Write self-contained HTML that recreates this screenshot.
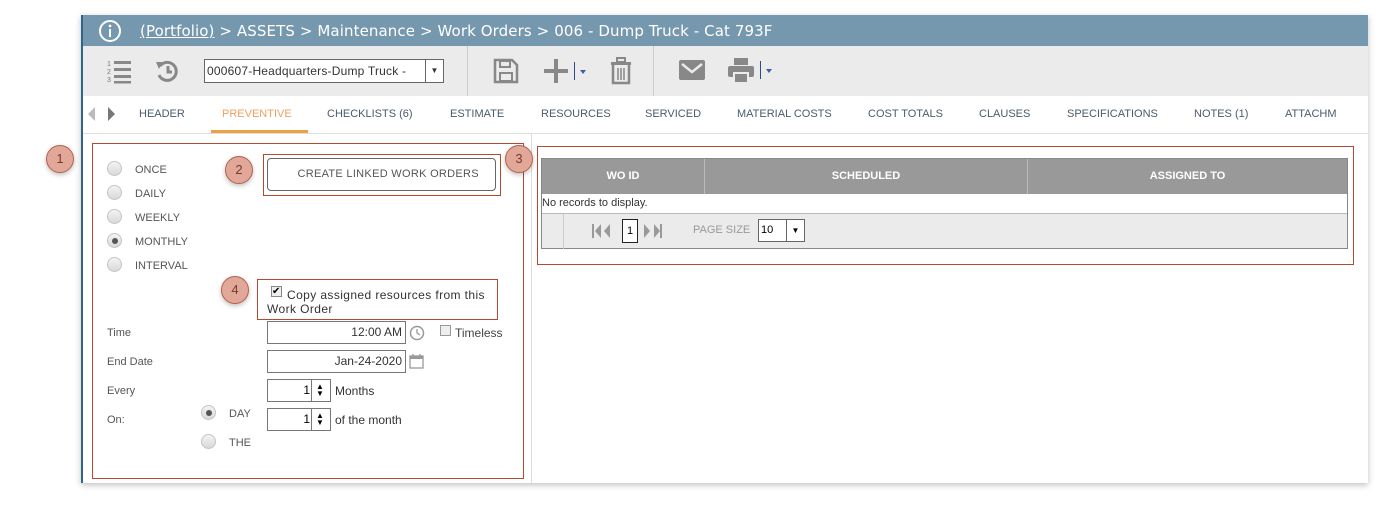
<!DOCTYPE html>
<html><head><style>
body{margin:0;width:1387px;height:506px;background:#fff;font-family:"Liberation Sans",sans-serif;position:relative;overflow:hidden}
.a{position:absolute}
.main{left:81px;top:15px;width:1287px;height:468px;background:#fff;box-shadow:0 2px 6px rgba(0,0,0,.25);border-left:2px solid #2e6589;box-sizing:border-box}
.hdr{left:0;top:0;width:100%;height:31px;background:#7598ae;color:#fff;font-size:15px}
.tb{left:0;top:31px;width:100%;height:50px;background:#ebebeb}
.tab{top:93px;font-size:11px;color:#4a5b6b}
.lbl{font-size:11px;color:#555}
.rad{width:15px;height:15px;border-radius:50%;background:linear-gradient(#f4f4f4,#d8d8d8);border:1px solid #c4c4c4;box-sizing:border-box}
.badge{width:28px;height:28px;border-radius:50%;background:#e1a899;border:1.5px solid #b5604a;box-sizing:border-box;color:#7a3a2a;font-size:13px;text-align:center;line-height:25px;box-shadow:0 2px 5px rgba(0,0,0,.25)}
.red{border:1px solid #b24a30;box-sizing:border-box}
.inp{border:1px solid #777;box-sizing:border-box;height:23px;background:#fff;font-size:12px;color:#333;text-align:right;line-height:21px;padding-right:3px}
.sp{border:1px solid #777;box-sizing:border-box;height:23px;background:#fff}
</style></head><body>
<div class="a main">
 <div class="a hdr">
  <svg class="a" style="left:15px;top:4px" width="24" height="24"><circle cx="12" cy="12" r="10" fill="none" stroke="#fff" stroke-width="2"/><rect x="11" y="10" width="2" height="8" fill="#fff"/><circle cx="12" cy="7" r="1.4" fill="#fff"/></svg>
  <div class="a" style="left:57px;top:7px;font-family:'DejaVu Sans',sans-serif;font-size:15px;letter-spacing:.1px"><u>(Portfolio)</u> &gt; ASSETS &gt; Maintenance &gt; Work Orders &gt; 006 - Dump Truck - Cat 793F</div>
 </div>
 <div class="a tb">
  <svg class="a" style="left:24px;top:12px" width="26" height="26"><text x="0" y="8" font-size="7" fill="#777">1</text><text x="0" y="16" font-size="7" fill="#777">2</text><text x="0" y="24" font-size="7" fill="#777">3</text><rect x="7" y="3" width="17" height="3" fill="#888"/><rect x="7" y="10" width="17" height="3" fill="#888"/><rect x="7" y="17" width="17" height="3" fill="#888"/><rect x="7" y="23" width="17" height="2.5" fill="#888"/></svg>
  <svg class="a" style="left:71px;top:12px" width="28" height="26"><path d="M6 8 A9 9 0 1 1 5 17" fill="none" stroke="#888" stroke-width="3"/><path d="M2 4 L9 4 L5 11Z" fill="#888"/><path d="M14 8 V14 H18" fill="none" stroke="#888" stroke-width="3"/></svg>
  <div class="a" style="left:121px;top:13px;width:240px;height:24px;border:1px solid #666;background:#fff;box-sizing:border-box;font-size:12px;line-height:22px;color:#333;padding-left:2px;letter-spacing:.2px">000607-Headquarters-Dump Truck -<div class="a" style="right:0;top:0;width:17px;height:22px;border-left:1px solid #666;font-size:8px;text-align:center">▼</div></div>
  <div class="a" style="left:384px;top:0;width:1px;height:50px;background:#ccc"></div>
  <svg class="a" style="left:409px;top:12px" width="28" height="26"><path d="M3 2 H20 L25 7 V24 H3Z" fill="none" stroke="#888" stroke-width="2.5"/><rect x="8" y="3" width="10" height="6" fill="none" stroke="#888" stroke-width="2"/><rect x="8" y="15" width="12" height="8" fill="none" stroke="#888" stroke-width="2"/></svg>
  <svg class="a" style="left:461px;top:12px" width="45" height="26"><rect x="0" y="11" width="24" height="4" fill="#888"/><rect x="10" y="1" width="4" height="24" fill="#888"/><rect x="30" y="4" width="1" height="18" fill="#2e4a8a"/><path d="M36 12 L42 12 L39 16Z" fill="#3b5fa8"/></svg>
  <svg class="a" style="left:527px;top:11px" width="22" height="28"><rect x="1" y="5" width="20" height="3" fill="#888"/><rect x="7" y="1" width="8" height="4" fill="none" stroke="#888" stroke-width="2"/><path d="M3 8 V26 H19 V8" fill="none" stroke="#888" stroke-width="2.5"/><path d="M8 11V23M11 11V23M14 11V23" stroke="#888" stroke-width="1.5"/></svg>
  <div class="a" style="left:570px;top:0;width:1px;height:50px;background:#ccc"></div>
  <svg class="a" style="left:596px;top:14px" width="26" height="20"><rect x="0" y="0" width="26" height="20" rx="2" fill="#888"/><path d="M3 4 L13 12 L23 4" fill="none" stroke="#ebebeb" stroke-width="2.5"/></svg>
  <svg class="a" style="left:645px;top:11px" width="50" height="28"><rect x="6" y="1" width="14" height="7" fill="#888"/><rect x="0" y="9" width="26" height="11" rx="2" fill="#888"/><rect x="6" y="16" width="14" height="10" fill="#888" stroke="#ebebeb" stroke-width="2"/><rect x="32" y="4" width="1" height="18" fill="#2e4a8a"/><path d="M38 12 L44 12 L41 16Z" fill="#3b5fa8"/></svg>
 </div>
 <svg class="a" style="left:4px;top:91px" width="30" height="16"><path d="M8 1 L1 8 L8 15Z" fill="#bbb"/><path d="M21 1 L28 8 L21 15Z" fill="#777"/></svg>
 <div class="a tab" style="left:56px">HEADER</div>
 <div class="a tab" style="left:139px;color:#f0a060">PREVENTIVE</div>
 <div class="a" style="left:128px;top:115px;width:97px;height:3px;background:#f0a040"></div>
 <div class="a tab" style="left:244px">CHECKLISTS (6)</div>
 <div class="a tab" style="left:367px">ESTIMATE</div>
 <div class="a tab" style="left:458px">RESOURCES</div>
 <div class="a tab" style="left:562px">SERVICED</div>
 <div class="a tab" style="left:654px">MATERIAL COSTS</div>
 <div class="a tab" style="left:785px">COST TOTALS</div>
 <div class="a tab" style="left:896px">CLAUSES</div>
 <div class="a tab" style="left:984px">SPECIFICATIONS</div>
 <div class="a tab" style="left:1111px">NOTES (1)</div>
 <div class="a tab" style="left:1202px">ATTACHM</div>
 <div class="a" style="left:0;top:118px;width:100%;height:1px;background:#ddd"></div>
 <div class="a" style="left:448px;top:118px;width:1px;height:350px;background:#ddd"></div>
</div>
<!-- left panel -->
<div class="a red" style="left:92px;top:143px;width:432px;height:336px"></div>
<div class="a rad" style="left:107px;top:161px"></div><div class="a lbl" style="left:135px;top:164px">ONCE</div>
<div class="a rad" style="left:107px;top:185px"></div><div class="a lbl" style="left:135px;top:188px">DAILY</div>
<div class="a rad" style="left:107px;top:209px"></div><div class="a lbl" style="left:135px;top:212px">WEEKLY</div>
<div class="a rad" style="left:107px;top:233px"><div class="a" style="left:4px;top:4px;width:6px;height:6px;border-radius:50%;background:#555"></div></div><div class="a lbl" style="left:135px;top:236px">MONTHLY</div>
<div class="a rad" style="left:107px;top:257px"></div><div class="a lbl" style="left:135px;top:260px">INTERVAL</div>
<div class="a red" style="left:263px;top:154px;width:238px;height:42px"></div>
<div class="a" style="left:267px;top:158px;width:229px;height:33px;border:1px solid #666;border-radius:4px;box-sizing:border-box;font-size:11px;color:#555;text-align:center;line-height:31px;letter-spacing:.3px">&nbsp;&nbsp;&nbsp;&nbsp;CREATE LINKED WORK ORDERS</div>
<div class="a red" style="left:257px;top:279px;width:241px;height:41px"></div>
<div class="a" style="left:271px;top:286px;width:11px;height:11px;border:1px solid #888;box-sizing:border-box;background:#eee;font-size:10px;line-height:9px">✔</div>
<div class="a" style="left:267px;top:288px;font-size:12px;color:#333;line-height:14px;width:232px;text-indent:20px;letter-spacing:.4px">Copy assigned resources from this Work Order</div>
<div class="a lbl" style="left:107px;top:327px">Time</div>
<div class="a inp" style="left:267px;top:321px;width:139px">12:00 AM</div>
<svg class="a" style="left:409px;top:325px" width="16" height="16"><circle cx="8" cy="8" r="6.5" fill="none" stroke="#999" stroke-width="1.5"/><path d="M8 4V8L11 10" fill="none" stroke="#999" stroke-width="1.3"/></svg>
<div class="a" style="left:440px;top:325px;width:11px;height:11px;border:1px solid #999;background:#eee;box-sizing:border-box"></div>
<div class="a" style="left:455px;top:326px;font-size:12px;color:#444">Timeless</div>
<div class="a lbl" style="left:107px;top:356px">End Date</div>
<div class="a inp" style="left:267px;top:350px;width:139px">Jan-24-2020</div>
<svg class="a" style="left:409px;top:353px" width="16" height="17"><rect x="1" y="3" width="13" height="12" fill="none" stroke="#999" stroke-width="1.3"/><rect x="1" y="3" width="13" height="3" fill="#999"/><path d="M4 1V4M11 1V4" stroke="#999" stroke-width="1.3"/></svg>
<div class="a lbl" style="left:107px;top:385px">Every</div>
<div class="a sp" style="left:267px;top:379px;width:64px"><div class="a" style="right:20px;top:3px;font-size:12px">1</div><div class="a" style="left:43px;top:0;width:1px;height:21px;background:#777"></div><div class="a" style="left:48px;top:3px;font-size:8px;line-height:7px">▲<br>▼</div></div>
<div class="a" style="left:335px;top:384px;font-size:12px;color:#333">Months</div>
<div class="a lbl" style="left:107px;top:414px">On:</div>
<div class="a rad" style="left:201px;top:405px"><div class="a" style="left:4px;top:4px;width:6px;height:6px;border-radius:50%;background:#555"></div></div><div class="a lbl" style="left:229px;top:408px">DAY</div>
<div class="a rad" style="left:201px;top:434px"></div><div class="a lbl" style="left:229px;top:437px">THE</div>
<div class="a sp" style="left:267px;top:408px;width:64px"><div class="a" style="right:20px;top:3px;font-size:12px">1</div><div class="a" style="left:43px;top:0;width:1px;height:21px;background:#777"></div><div class="a" style="left:48px;top:3px;font-size:8px;line-height:7px">▲<br>▼</div></div>
<div class="a" style="left:335px;top:413px;font-size:12px;color:#333">of the month</div>
<!-- right panel -->
<div class="a red" style="left:537px;top:146px;width:817px;height:119px"></div>
<div class="a" style="left:541px;top:158px;width:807px;height:91px;border:1px solid #888;box-sizing:border-box;background:#ebebeb">
 <div class="a" style="left:0;top:0;width:805px;height:35px;background:#999;color:#fff;font-size:11px;font-weight:bold;line-height:34px">
  <div class="a" style="left:0;width:162px;text-align:center">WO ID</div>
  <div class="a" style="left:162px;width:1px;height:35px;background:#bbb"></div>
  <div class="a" style="left:163px;width:322px;text-align:center">SCHEDULED</div>
  <div class="a" style="left:485px;width:1px;height:35px;background:#bbb"></div>
  <div class="a" style="left:486px;width:319px;text-align:center">ASSIGNED TO</div>
 </div>
 <div class="a" style="left:0;top:35px;width:805px;height:19px;background:#fff;border-bottom:1px solid #bbb;font-size:11px;color:#333;line-height:18px">No records to display.</div>
 <div class="a" style="left:21px;top:55px;width:1px;height:35px;background:#ccc"></div>
 <svg class="a" style="left:50px;top:64px" width="84" height="16"><rect x="0" y="1" width="2" height="14" fill="#999"/><path d="M9 1L3 8L9 15Z" fill="#999"/><path d="M18 1L12 8L18 15Z" fill="#999"/><path d="M52 1L58 8L52 15Z" fill="#999"/><path d="M62 1L68 8L62 15Z" fill="#999"/><rect x="68" y="1" width="2" height="14" fill="#999"/></svg>
 <div class="a" style="left:80px;top:60px;width:16px;height:24px;border:1px solid #222;box-sizing:border-box;background:#fff;font-size:11px;text-align:center;line-height:22px">1</div>
 <div class="a" style="left:151px;top:65px;font-size:11px;color:#999">PAGE SIZE</div>
 <div class="a" style="left:216px;top:60px;width:47px;height:23px;border:1px solid #666;box-sizing:border-box;background:#fff;font-size:11px;line-height:21px;padding-left:2px">10<div class="a" style="right:0;top:0;width:17px;height:21px;border-left:1px solid #666;font-size:8px;text-align:center">▼</div></div>
</div>
<div class="a badge" style="left:46px;top:145px">1</div>
<div class="a badge" style="left:225px;top:156px">2</div>
<div class="a badge" style="left:505px;top:145px">3</div>
<div class="a badge" style="left:221px;top:276px">4</div>
</body></html>
